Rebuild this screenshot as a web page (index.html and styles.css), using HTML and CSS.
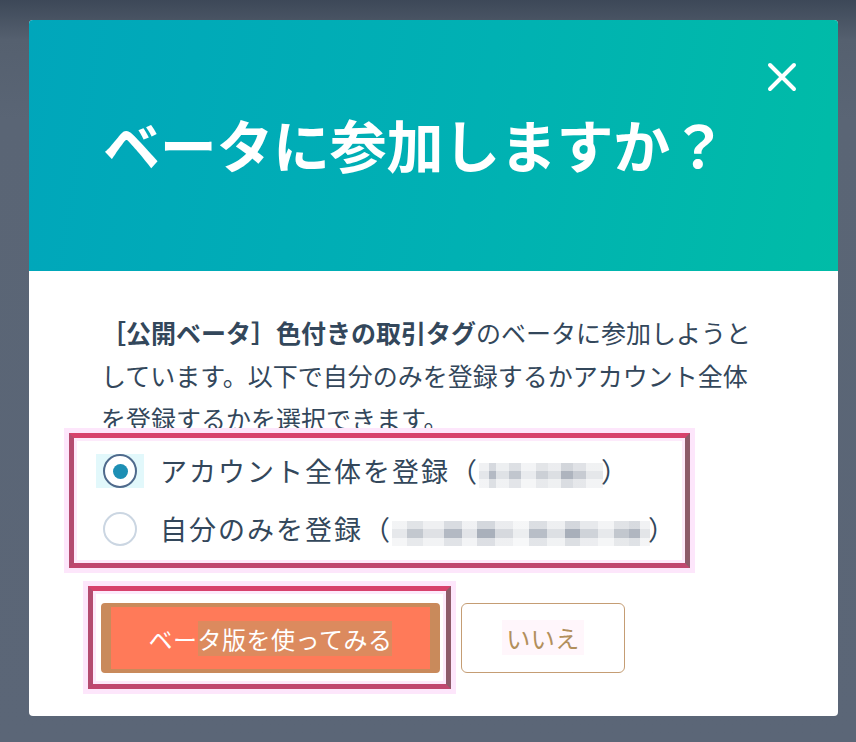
FILE: index.html
```html
<!DOCTYPE html>
<html lang="ja">
<head>
<meta charset="utf-8">
<title>ベータに参加しますか？</title>
<link rel="stylesheet" href="styles.css">
</head>
<body>
<div class="dialog">
  <div class="header">
    <h1 class="title">ベータに参加しますか？</h1>
    <button class="close" aria-label="閉じる">
      <svg width="30" height="30" viewBox="0 0 30 30"><path d="M3 3 L27 27 M27 3 L3 27" stroke="#fff" stroke-width="4" stroke-linecap="round" fill="none"/></svg>
    </button>
  </div>
  <div class="content">
    <p class="desc"><strong>［公開ベータ］色付きの取引タグ</strong>のベータに参加しようとしています。以下で自分のみを登録するかアカウント全体を登録するかを選択できます。</p>
    <div class="mark radios">
      <label class="row">
        <span class="radio-wrap focus"><span class="radio checked"><span class="dot"></span></span></span>
        <span class="label">アカウント全体を登録（<span class="blur short"></span>）</span>
      </label>
      <label class="row">
        <span class="radio-wrap"><span class="radio"></span></span>
        <span class="label">自分のみを登録（<span class="blur long"></span>）</span>
      </label>
    </div>
    <div class="actions">
      <div class="mark btn-mark">
        <button class="btn primary">ベー<span class="hl">タ版を使ってみる</span></button>
      </div>
      <button class="btn secondary"><span class="hl2">いいえ</span></button>
    </div>
  </div>
</div>
</body>
</html>
```
FILE: styles.css
```css
html, body {
  margin: 0;
  padding: 0;
}
body {
  width: 856px;
  height: 742px;
  overflow: hidden;
  background: linear-gradient(180deg, #3d4858 0px, #55606f 40px, #5a6575 120px, #5b6677 100%);
  font-family: "Noto Sans CJK JP", "Noto Sans", sans-serif;
  color: #33475b;
  padding: 20px 0 0 29px;
  box-sizing: border-box;
}
.dialog {
  width: 809px;
  background: #fff;
  border-radius: 4px;
  overflow: hidden;
}
.header {
  height: 251px;
  box-sizing: border-box;
  background: linear-gradient(100deg, #00a6bb 0%, #00b1b3 55%, #00bca7 100%);
  display: flex;
  justify-content: space-between;
  align-items: flex-start;
  padding: 42px 41px 0 74px;
}
.title {
  margin: 47px 0 0 0;
  font-size: 57px;
  line-height: 1.2;
  font-weight: 700;
  color: #fff;
  letter-spacing: -0.3px;
}
.close {
  width: 30px;
  height: 30px;
  padding: 0;
  border: 0;
  background: none;
  display: block;
}
.close svg { display: block; }
.content {
  padding: 40px 0 27px 40px;
}
.desc {
  margin: 0 0 -7px 32px;
  width: 665px;
  font-size: 25px;
  line-height: 43px;
}
.desc strong { font-weight: 700; }
.mark {
  position: relative;
  box-sizing: border-box;
  border: 5px solid;
  border-color: #d7416c #8d5a69 #c0476f #b44c70;
  background: #fff;
  box-shadow: 0 0 0 5px #fde6fb, inset 0 0 0 3px #fdeafb;
}
.radios {
  width: 621px;
  padding: 4px 0 5px 22px;
}
.row {
  display: flex;
  align-items: center;
  height: 58px;
}
.radio-wrap {
  display: flex;
  align-items: center;
  justify-content: center;
  width: 48px;
  height: 34px;
  margin-right: 16px;
}
.radio-wrap.focus { background: #e2f8fb; }
.radio {
  width: 34px;
  height: 34px;
  box-sizing: border-box;
  border-radius: 50%;
  border: 2px solid #cbd6e2;
  background: #fff;
  display: flex;
  align-items: center;
  justify-content: center;
}
.radio.checked { border-color: #4f6a8c; }
.dot {
  width: 15px;
  height: 15px;
  border-radius: 50%;
  background: #1d8fb4;
}
.label {
  font-size: 27px;
  letter-spacing: 2px;
  line-height: 58px;
  white-space: nowrap;
}
.blur {
  display: inline-block;
  height: 25px;
  vertical-align: -6px;
  margin-right: -2px;
  background:
    linear-gradient(180deg, rgba(255,255,255,0.45) 0 33%, rgba(255,255,255,0) 33% 66%, rgba(255,255,255,0.55) 66% 100%),
    linear-gradient(90deg, #e4e6ea 0 8%, #b4bac4 8% 14%, #dfe2e6 14% 24%, #c1c6ce 24% 34%, #e9ebee 34% 46%, #ccd0d6 46% 56%, #dcdfe3 56% 66%, #aeb4be 66% 76%, #c7cbd2 76% 86%, #e5e7ea 86% 100%);
}
.blur.short { width: 124px; }
.blur.long {
  width: 258px;
  background:
    linear-gradient(180deg, rgba(255,255,255,0.5) 0 33%, rgba(255,255,255,0) 33% 66%, rgba(255,255,255,0.6) 66% 100%),
    linear-gradient(90deg, #e6e8eb 0 6%, #c3c8cf 6% 12%, #dfe1e5 12% 20%, #b3b9c3 20% 27%, #e2e4e8 27% 33%, #a9b0bb 33% 40%, #d6d9de 40% 47%, #eceef0 47% 53%, #b8bec7 53% 60%, #dde0e4 60% 67%, #a8afba 67% 73%, #cfd3d9 73% 80%, #e7e9ec 80% 86%, #c2c7ce 86% 92%, #b0b6c0 92% 96%, #e3e5e8 96% 100%);
}
.actions {
  display: flex;
  align-items: center;
  margin: 18px 0 0 19px;
}
.btn-mark {
  padding: 12px 6px 11px 8px;
}
.btn {
  box-sizing: border-box;
  height: 70px;
  font-family: "Noto Sans CJK JP", "Noto Sans", sans-serif;
  font-size: 24px;
  letter-spacing: 0.5px;
  border-radius: 4px;
  display: flex;
  align-items: center;
  justify-content: center;
  padding: 0;
}
.primary {
  width: 339px;
  background: #ff7a59;
  border: solid #c98a5b;
  border-width: 4px 10px;
  color: #fff;
}
.hl { background: #dc8a5e; }
.secondary {
  width: 164px;
  margin-left: 10px;
  background: #fff;
  border: 1px solid #c59d74;
  border-radius: 6px;
  color: #b28f5c;
}
.hl2 { background: #fff6fb; padding: 0 4px; }
```
